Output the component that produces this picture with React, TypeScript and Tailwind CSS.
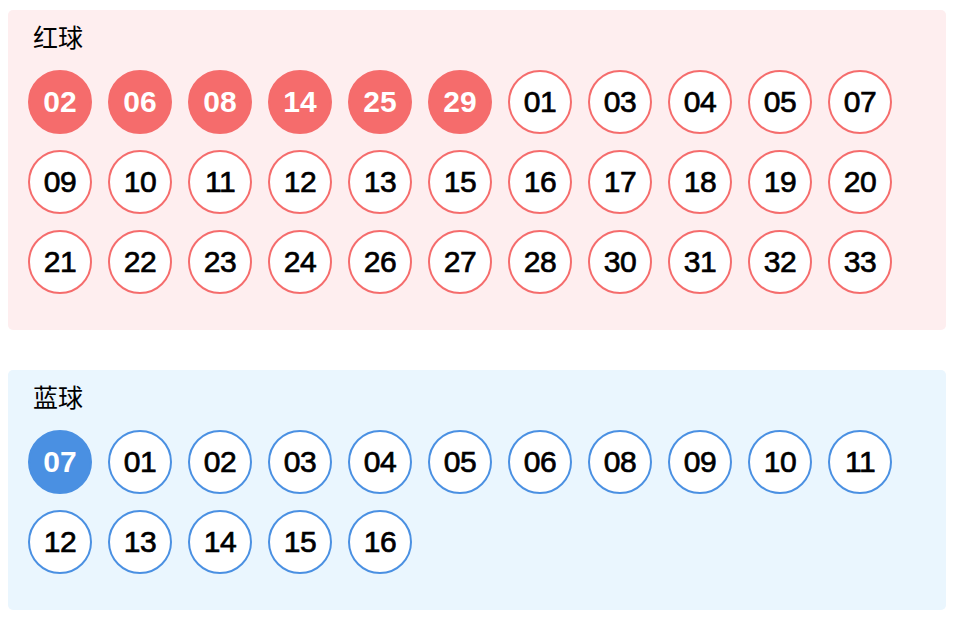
const redAll = Array.from({ length: 33 }, (_, i) => String(i + 1).padStart(2, '0'));
const blueAll = Array.from({ length: 16 }, (_, i) => String(i + 1).padStart(2, '0'));

const redPicked = ['02', '06', '08', '14', '25', '29'];
const bluePicked = ['07'];

interface PanelProps {
  title: string;
  all: string[];
  picked: string[];
  kind: 'red' | 'blue';
}

function Ball({ num, on, kind }: { num: string; on: boolean; kind: 'red' | 'blue' }) {
  const cls =
    kind === 'red'
      ? on
        ? 'bg-[#f56c6c] border-[#f56c6c] text-white font-bold'
        : 'bg-white border-[#f56c6c] text-black tracking-[-0.5px] [-webkit-text-stroke:0.7px_#000]'
      : on
        ? 'bg-[#4a90e2] border-[#4a90e2] text-white font-bold'
        : 'bg-white border-[#4a90e2] text-black tracking-[-0.5px] [-webkit-text-stroke:0.7px_#000]';
  return (
    <div
      className={`m-2 flex h-16 w-16 items-center justify-center rounded-full border-2 text-[30px] leading-none ${cls}`}
    >
      {num}
    </div>
  );
}

function Panel({ title, all, picked, kind }: PanelProps) {
  // 选中的排前面，其余按顺序
  const rest = all.filter((n) => !picked.includes(n));
  const balls = [...picked, ...rest];
  return (
    <div
      className={`rounded-[5px] px-3 pt-[10px] pb-7 ${kind === 'red' ? 'bg-[#feeeef]' : 'bg-[#eaf6fe]'}`}
    >
      <div className="pl-[13px] text-[25px] leading-9 text-black mb-[6px]">{title}</div>
      <div className="flex flex-wrap">
        {balls.map((n) => (
          <Ball key={n} num={n} on={picked.includes(n)} kind={kind} />
        ))}
      </div>
    </div>
  );
}

export default function App() {
  return (
    <div
      className="min-h-[620px] bg-white px-2 pt-[10px] flex flex-col gap-10"
      style={{ fontFamily: '"Liberation Sans", "Noto Sans CJK SC", sans-serif' }}
    >
      <Panel title="红球" all={redAll} picked={redPicked} kind="red" />
      <Panel title="蓝球" all={blueAll} picked={bluePicked} kind="blue" />
    </div>
  );
}
